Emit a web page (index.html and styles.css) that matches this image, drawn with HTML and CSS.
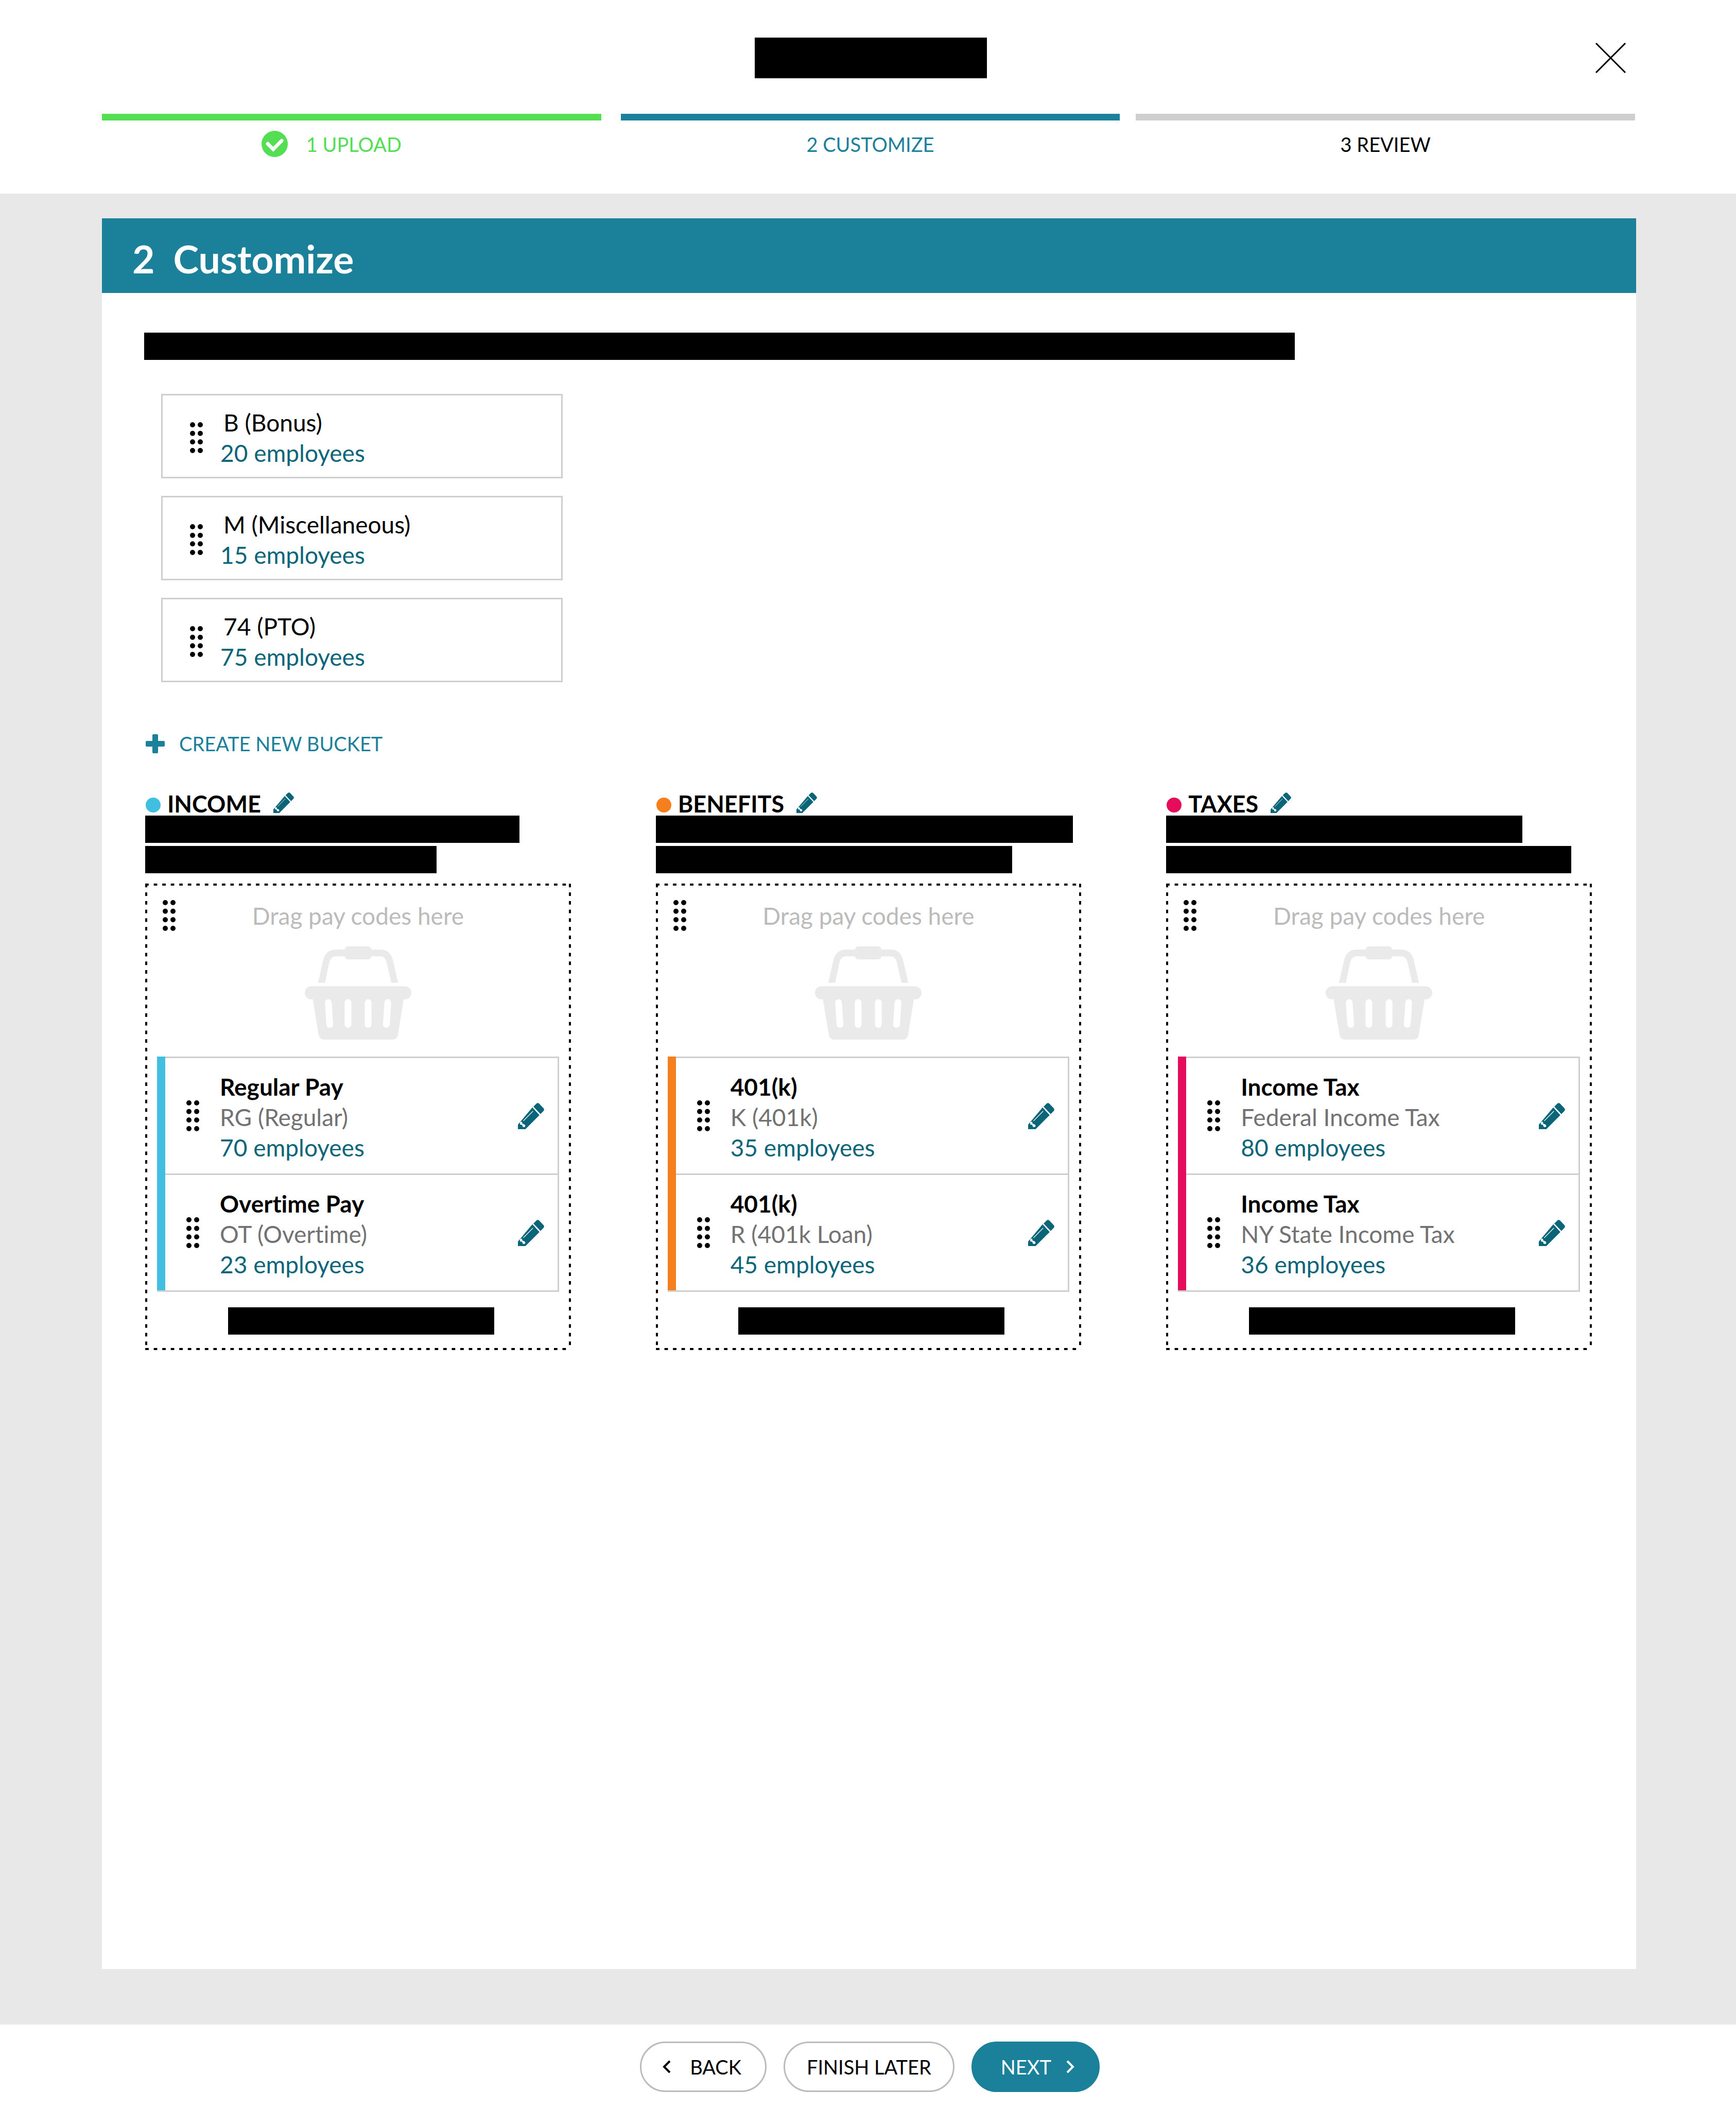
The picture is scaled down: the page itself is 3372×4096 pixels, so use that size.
FILE: index.html
```
<!DOCTYPE html>
<html lang="en">
<head>
  <meta charset="utf-8">
  <meta name="viewport" content="width=device-width, initial-scale=1">
  <title>Customize</title>
  <link rel="stylesheet" href="styles.css">
</head>
<body>
  <svg class="sprite" aria-hidden="true">
    <symbol id="grip" viewBox="0 0 30 72">
      <circle cx="6" cy="6" r="6"/><circle cx="24" cy="6" r="6"/>
      <circle cx="6" cy="26" r="6"/><circle cx="24" cy="26" r="6"/>
      <circle cx="6" cy="46" r="6"/><circle cx="24" cy="46" r="6"/>
      <circle cx="6" cy="66" r="6"/><circle cx="24" cy="66" r="6"/>
    </symbol>
    <symbol id="pencil" viewBox="0 0 185 185">
      <path d="M0 185V153L102 32L152 86L53 185Z"/>
      <path d="M109 26L130 5Q140 -3 150 5L180 37Q188 46 181 56L159 79Z"/>
      <path d="M38 127L106 58" fill="none" stroke="#fff" stroke-width="4"/>
      <path d="M14 135L28 132L32 147L48 152L53 163L46 171L33 168L30 155L15 152Z" fill="#fff"/>
    </symbol>
    <symbol id="basket" viewBox="30 65 755 660">
      <path d="M124 323L160 165Q178 88 250 88H565Q637 88 655 165L691 323H643L608 172Q597 135 565 135H250Q218 135 205 172L173 323Z"/>
      <rect x="313" y="65" width="188" height="92" rx="24"/>
      <rect x="30" y="348" width="755" height="92" rx="46"/>
      <path d="M85 430L128 690Q134 725 168 725H650Q684 725 690 690L732 430Z"/>
      <path d="M197 463L207 618M336 463V618M479 463V618M618 463L608 618" fill="none" stroke="#fff" stroke-width="48" stroke-linecap="round"/>
    </symbol>
  </svg>

  <header class="header">
    <div class="topbar">
      <div class="redacted redacted-title"></div>
      <button class="icon-button close" type="button" aria-label="Close">
        <svg class="close-icon" viewBox="0 0 59 59" aria-hidden="true"><path d="M1 1L58 58M58 1L1 58" fill="none" stroke="#000" stroke-width="3"/></svg>
      </button>
    </div>
    <ol class="steps">
      <li class="step step-done">
        <span class="step-label">
          <svg class="check-icon" viewBox="29 27 186 186" aria-hidden="true"><circle cx="122" cy="120" r="93"/><path d="M73 119L112 158L172 97" fill="none" stroke="#fff" stroke-width="25" stroke-linecap="round"/></svg>
          1 UPLOAD
        </span>
      </li>
      <li class="step step-current" aria-current="step"><span class="step-label">2 CUSTOMIZE</span></li>
      <li class="step"><span class="step-label">3 REVIEW</span></li>
    </ol>
  </header>

  <main class="main">
    <section class="panel">
      <h1 class="panel-title"><span>2</span><span>Customize</span></h1>
      <div class="panel-body">
        <div class="redacted redacted-intro"></div>

        <ul class="codes">
          <li class="code">
            <svg class="grip" aria-hidden="true"><use href="#grip"/></svg>
            <div class="code-text"><p class="code-name">B (Bonus)</p><p class="count">20 employees</p></div>
          </li>
          <li class="code">
            <svg class="grip" aria-hidden="true"><use href="#grip"/></svg>
            <div class="code-text"><p class="code-name">M (Miscellaneous)</p><p class="count">15 employees</p></div>
          </li>
          <li class="code">
            <svg class="grip" aria-hidden="true"><use href="#grip"/></svg>
            <div class="code-text"><p class="code-name">74 (PTO)</p><p class="count">75 employees</p></div>
          </li>
        </ul>

        <button class="create" type="button">
          <svg class="plus-icon" viewBox="0 0 37 37" aria-hidden="true"><rect x="13" y="0" width="11" height="37" rx="2"/><rect x="0" y="13" width="37" height="11" rx="2"/></svg>
          CREATE NEW BUCKET
        </button>

        <div class="buckets">
          <section class="bucket bucket-income">
            <div class="bucket-head">
              <span class="dot"></span>
              <h2 class="bucket-name">INCOME</h2>
              <button class="icon-button" type="button" aria-label="Edit Income bucket"><svg class="pencil-small" aria-hidden="true"><use href="#pencil"/></svg></button>
            </div>
            <div class="description"><div class="redacted line-a"></div><div class="redacted line-b"></div></div>
            <div class="dropzone">
              <svg class="grip zone-grip" aria-hidden="true"><use href="#grip"/></svg>
              <p class="hint">Drag pay codes here</p>
              <svg class="basket" aria-hidden="true"><use href="#basket"/></svg>
              <ul class="items">
                <li class="item">
                  <svg class="grip" aria-hidden="true"><use href="#grip"/></svg>
                  <div class="item-text"><h3 class="item-name">Regular Pay</h3><p class="item-code">RG (Regular)</p><p class="count">70 employees</p></div>
                  <button class="icon-button" type="button" aria-label="Edit Regular Pay"><svg class="pencil" aria-hidden="true"><use href="#pencil"/></svg></button>
                </li>
                <li class="item">
                  <svg class="grip" aria-hidden="true"><use href="#grip"/></svg>
                  <div class="item-text"><h3 class="item-name">Overtime Pay</h3><p class="item-code">OT (Overtime)</p><p class="count">23 employees</p></div>
                  <button class="icon-button" type="button" aria-label="Edit Overtime Pay"><svg class="pencil" aria-hidden="true"><use href="#pencil"/></svg></button>
                </li>
              </ul>
              <div class="zone-foot"><div class="redacted redacted-foot"></div></div>
            </div>
          </section>

          <section class="bucket bucket-benefits">
            <div class="bucket-head">
              <span class="dot"></span>
              <h2 class="bucket-name">BENEFITS</h2>
              <button class="icon-button" type="button" aria-label="Edit Benefits bucket"><svg class="pencil-small" aria-hidden="true"><use href="#pencil"/></svg></button>
            </div>
            <div class="description"><div class="redacted line-a"></div><div class="redacted line-b"></div></div>
            <div class="dropzone">
              <svg class="grip zone-grip" aria-hidden="true"><use href="#grip"/></svg>
              <p class="hint">Drag pay codes here</p>
              <svg class="basket" aria-hidden="true"><use href="#basket"/></svg>
              <ul class="items">
                <li class="item">
                  <svg class="grip" aria-hidden="true"><use href="#grip"/></svg>
                  <div class="item-text"><h3 class="item-name">401(k)</h3><p class="item-code">K (401k)</p><p class="count">35 employees</p></div>
                  <button class="icon-button" type="button" aria-label="Edit 401(k)"><svg class="pencil" aria-hidden="true"><use href="#pencil"/></svg></button>
                </li>
                <li class="item">
                  <svg class="grip" aria-hidden="true"><use href="#grip"/></svg>
                  <div class="item-text"><h3 class="item-name">401(k)</h3><p class="item-code">R (401k Loan)</p><p class="count">45 employees</p></div>
                  <button class="icon-button" type="button" aria-label="Edit 401(k) loan"><svg class="pencil" aria-hidden="true"><use href="#pencil"/></svg></button>
                </li>
              </ul>
              <div class="zone-foot"><div class="redacted redacted-foot"></div></div>
            </div>
          </section>

          <section class="bucket bucket-taxes">
            <div class="bucket-head">
              <span class="dot"></span>
              <h2 class="bucket-name">TAXES</h2>
              <button class="icon-button" type="button" aria-label="Edit Taxes bucket"><svg class="pencil-small" aria-hidden="true"><use href="#pencil"/></svg></button>
            </div>
            <div class="description"><div class="redacted line-a"></div><div class="redacted line-b"></div></div>
            <div class="dropzone">
              <svg class="grip zone-grip" aria-hidden="true"><use href="#grip"/></svg>
              <p class="hint">Drag pay codes here</p>
              <svg class="basket" aria-hidden="true"><use href="#basket"/></svg>
              <ul class="items">
                <li class="item">
                  <svg class="grip" aria-hidden="true"><use href="#grip"/></svg>
                  <div class="item-text"><h3 class="item-name">Income Tax</h3><p class="item-code">Federal Income Tax</p><p class="count">80 employees</p></div>
                  <button class="icon-button" type="button" aria-label="Edit Federal Income Tax"><svg class="pencil" aria-hidden="true"><use href="#pencil"/></svg></button>
                </li>
                <li class="item">
                  <svg class="grip" aria-hidden="true"><use href="#grip"/></svg>
                  <div class="item-text"><h3 class="item-name">Income Tax</h3><p class="item-code">NY State Income Tax</p><p class="count">36 employees</p></div>
                  <button class="icon-button" type="button" aria-label="Edit NY State Income Tax"><svg class="pencil" aria-hidden="true"><use href="#pencil"/></svg></button>
                </li>
              </ul>
              <div class="zone-foot"><div class="redacted redacted-foot"></div></div>
            </div>
          </section>
        </div>
      </div>
    </section>
  </main>

  <footer class="footer">
    <button class="button button-back" type="button">
      <svg class="chevron" viewBox="0 0 16 26" aria-hidden="true"><path d="M14 2L3 13L14 24"/></svg>
      BACK
    </button>
    <button class="button button-later" type="button">FINISH LATER</button>
    <button class="button button-next" type="button">
      NEXT
      <svg class="chevron" viewBox="0 0 16 26" aria-hidden="true"><path d="M2 2L13 13L2 24"/></svg>
    </button>
  </footer>
</body>
</html>
```
FILE: styles.css
```
:root {
  --teal: #1b8099;
  --teal-dark: #0b6578;
  --green: #53de53;
  --line: #cfcfcf;
}

* {
  box-sizing: border-box;
}

body {
  margin: 0;
  min-height: 100vh;
  display: flex;
  flex-direction: column;
  background: #e8e8e8;
  color: #000;
  font: 400 46px/59px Lato, "Open Sans", sans-serif;
  font-variant-ligatures: none;
}

h1, h2, h3, p, ul, ol {
  margin: 0;
  padding: 0;
  list-style: none;
}

svg {
  display: block;
  flex: none;
}

button {
  margin: 0;
  padding: 0;
  border: 0;
  background: none;
  color: inherit;
  font: inherit;
  font-size: 38px;
  line-height: 46px;
  cursor: pointer;
}

.sprite {
  position: absolute;
  width: 0;
  height: 0;
}

.icon-button {
  flex: none;
  color: var(--teal-dark);
  fill: currentColor;
}

.redacted {
  height: 53px;
  max-width: 100%;
  background: #000;
}

.grip {
  width: 25px;
  height: 60px;
}

.count {
  color: var(--teal-dark);
}

/* Header and steps */

.header {
  padding: 73px 0 71px;
  background: #fff;
}

.topbar {
  display: grid;
  grid-template-columns: 1fr auto 1fr;
  align-items: center;
  padding: 0 214px 0 224px;
}

.redacted-title {
  grid-column: 2;
  width: 451px;
  height: 79px;
}

.close {
  justify-self: end;
}

.close-icon {
  width: 59px;
  height: 59px;
}

.steps {
  display: flex;
  gap: 31px;
  padding: 0 196px 0 198px;
  margin-top: 69px;
}

.step {
  flex: 1;
  border-top: 13px solid var(--line);
}

.step-label {
  display: flex;
  align-items: center;
  justify-content: center;
  gap: 36px;
  min-height: 51px;
  margin-top: 20px;
  font-size: 38px;
  line-height: 46px;
}

.step-done {
  margin-right: 7px;
  border-color: var(--green);
  color: var(--green);
}

.step-done .step-label {
  padding-right: 78px;
}

.step-current {
  border-color: var(--teal);
  color: var(--teal);
}

.check-icon {
  width: 51px;
  height: 51px;
  fill: var(--green);
}

/* Panel */

.main {
  flex: 1;
  display: flex;
  padding: 48px 194px 108px 198px;
}

.panel {
  flex: 1;
  background: #fff;
}

.panel-title {
  display: flex;
  gap: 36px;
  padding: 33px 59px 22px;
  background: var(--teal);
  color: #fff;
  font-size: 75px;
  font-weight: 700;
  line-height: 90px;
}

.panel-body {
  padding: 77px 86px 77px 82px;
}

.redacted-intro {
  width: 2235px;
}

.codes {
  display: grid;
  gap: 34px;
  width: 780px;
  margin: 66px 0 0 33px;
}

.code {
  display: flex;
  align-items: center;
  gap: 34px;
  padding: 23px 53px 17px;
  border: 3px solid var(--line);
}

.code-name {
  padding-left: 6px;
}

.create {
  display: flex;
  align-items: center;
  gap: 28px;
  margin: 96px 0 0 3px;
  color: var(--teal);
}

.plus-icon {
  width: 37px;
  height: 37px;
  fill: currentColor;
}

/* Buckets */

.buckets {
  display: grid;
  grid-template-columns: repeat(3, 1fr);
  gap: 165px;
  margin: 67px 0 0 2px;
}

.bucket-income { --accent: #40bfe0; }
.bucket-benefits { --accent: #f57f1d; }
.bucket-taxes { --accent: #e60c5c; }

.bucket-head {
  display: flex;
  align-items: center;
  height: 50px;
}

.dot {
  width: 29px;
  height: 29px;
  margin: 8px 13px 0 1px;
  border-radius: 50%;
  background: var(--accent);
}

.bucket-name {
  margin-right: 24px;
  padding-top: 4px;
  font-size: 45px;
  font-weight: 700;
  line-height: 50px;
}

.pencil-small {
  width: 40px;
  height: 40px;
}

.description {
  display: grid;
  gap: 6px;
}

.bucket-income .line-a { width: 727px; }
.bucket-income .line-b { width: 566px; }
.bucket-benefits .line-a { width: 810px; }
.bucket-benefits .line-b { width: 692px; }
.bucket-taxes .line-a { width: 692px; }
.bucket-taxes .line-b { width: 787px; }

/* Dashed frame: two dashes per tile, tiles rounded to fill each side */
.dropzone {
  --dash: #000 0 20%, transparent 20% 50%, #000 50% 70%, transparent 70%;
  position: relative;
  display: flex;
  flex-direction: column;
  align-items: center;
  margin-top: 20px;
  padding: 33px 23px 30px;
  background:
    linear-gradient(90deg, var(--dash)) top / 33px 4px round no-repeat,
    linear-gradient(90deg, var(--dash)) bottom / 33px 4px round no-repeat,
    linear-gradient(180deg, var(--dash)) left / 4px 33px no-repeat round,
    linear-gradient(180deg, var(--dash)) right / 4px 33px no-repeat round;
}

.zone-grip {
  position: absolute;
  top: 32px;
  left: 34px;
}

.hint {
  color: #bbb;
}

.basket {
  width: 207px;
  height: 181px;
  margin: 30px 0 33px;
  fill: #eaeaea;
}

/* The accent bar is a background strip, so it runs past the row borders */
.items {
  align-self: stretch;
  padding-left: 16px;
  border: 3px solid var(--line);
  border-width: 0 3px 3px 0;
  background: linear-gradient(var(--accent), var(--accent)) left / 16px 100% no-repeat border-box;
}

.item {
  display: flex;
  align-items: center;
  gap: 40px;
  min-height: 227px;
  padding: 0 26px 0 41px;
  border-top: 3px solid var(--line);
}

.item-text {
  flex: 1;
  padding-top: 4px;
}

.item-name {
  font-size: 46px;
  font-weight: 700;
}

.item-code {
  color: #727272;
}

.pencil {
  width: 51px;
  height: 51px;
}

.zone-foot {
  padding: 30px 0 0 12px;
}

.redacted-foot {
  width: 517px;
}

/* Footer */

.footer {
  display: flex;
  justify-content: center;
  gap: 33px;
  padding: 33px 0 33px 7px;
  background: #fff;
}

.button {
  display: flex;
  align-items: center;
  justify-content: center;
  height: 98px;
  padding: 0 42px;
  border: 3px solid #bbb;
  border-radius: 49px;
}

.button-back {
  gap: 37px;
  padding: 0 46px 0 41px;
}

.button-next {
  gap: 29px;
  padding: 0 46px 0 54px;
  border-color: var(--teal);
  background: var(--teal);
  color: #fff;
}

.chevron {
  width: 16px;
  height: 26px;
  fill: none;
  stroke: currentColor;
  stroke-width: 4px;
}
```
